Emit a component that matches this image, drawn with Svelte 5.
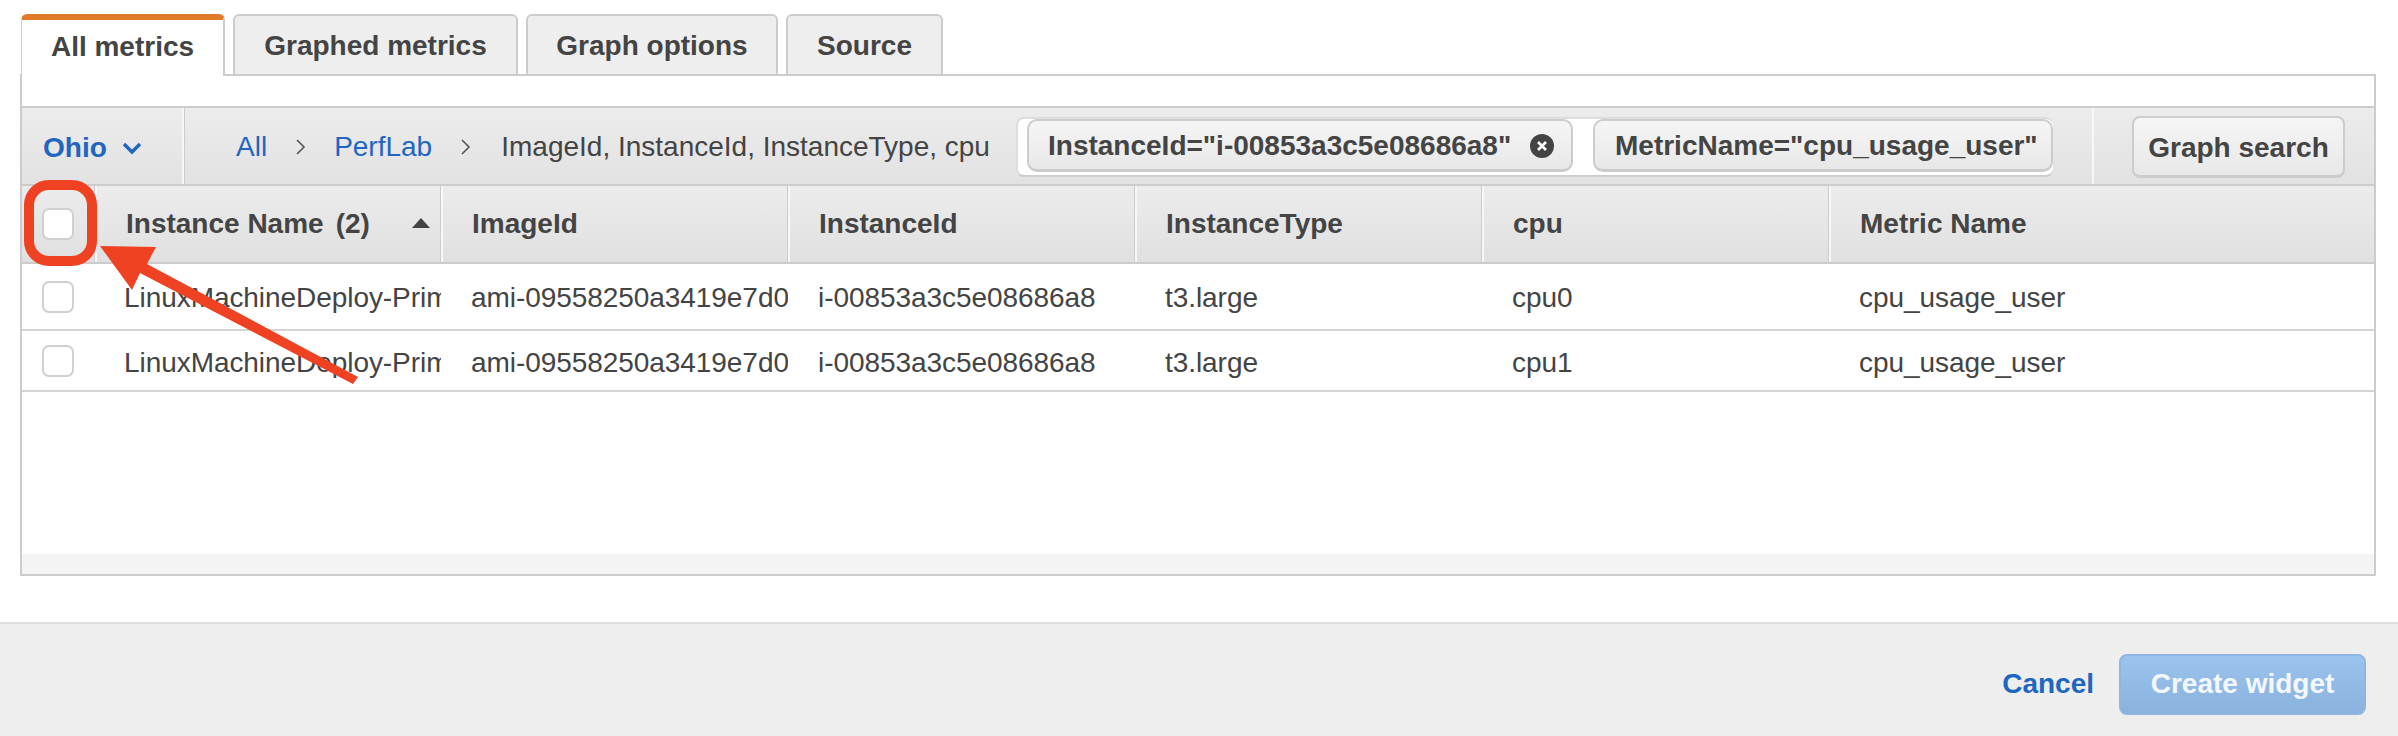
<script>
  const tabs = ["All metrics", "Graphed metrics", "Graph options", "Source"];
  const columns = ["ImageId", "InstanceId", "InstanceType", "cpu", "Metric Name"];
  const rows = [
    ["LinuxMachineDeploy-PrimaryInstance", "ami-09558250a3419e7d0f", "i-00853a3c5e08686a8", "t3.large", "cpu0", "cpu_usage_user"],
    ["LinuxMachineDeploy-PrimaryInstance", "ami-09558250a3419e7d0f", "i-00853a3c5e08686a8", "t3.large", "cpu1", "cpu_usage_user"]
  ];
</script>

<div class="page">
  <div class="tabs">
    {#each tabs as tab, i}
      <div class="tab" class:active={i === 0}>{tab}</div>
    {/each}
  </div>

  <div class="panel">
    <div class="spacer"></div>

    <div class="toolbar">
      <div class="region">
        <span>Ohio</span>
        <svg width="22" height="14" viewBox="0 0 22 14"><path d="M3 3l8 8 8-8" fill="none" stroke="#1f66c1" stroke-width="3.4" /></svg>
      </div>
      <div class="crumbs">
        <a href="#all">All</a>
        <svg class="sep one" width="12" height="20" viewBox="0 0 12 20"><path d="M2 3l7 7-7 7" fill="none" stroke="#555" stroke-width="1.6" /></svg>
        <a href="#perflab">PerfLab</a>
        <svg class="sep two" width="12" height="20" viewBox="0 0 12 20"><path d="M2 3l7 7-7 7" fill="none" stroke="#555" stroke-width="1.6" /></svg>
        <span class="dims">ImageId, InstanceId, InstanceType, cpu</span>
      </div>
      <div class="filters">
        <div class="token first">
          <span>InstanceId="i-00853a3c5e08686a8"</span>
          <svg width="24" height="24" viewBox="0 0 24 24"><circle cx="12" cy="12" r="12" fill="#444" /><path d="M8 8l8 8M16 8l-8 8" stroke="#fff" stroke-width="2.6" /></svg>
        </div>
        <div class="token second"><span>MetricName="cpu_usage_user"</span></div>
      </div>
      <div class="search">
        <button type="button">Graph search</button>
      </div>
    </div>

    <div class="head">
      <div class="check-col"><span class="check"></span></div>
      <div class="col name">
        <span>Instance Name</span><span class="count">(2)</span>
        <svg class="sort" width="18" height="10" viewBox="0 0 18 10"><path d="M9 0l9 10H0z" fill="#444" /></svg>
      </div>
      {#each columns as col}
        <div class="col">{col}</div>
      {/each}
    </div>

    {#each rows as row, r}
      <div class="row" class:second-row={r === 1}>
        <div class="check-col"><span class="check"></span></div>
        {#each row as cell}
          <div class="cell">{cell}</div>
        {/each}
      </div>
    {/each}

    <div class="empty"></div>
    <div class="strip"></div>
  </div>

  <div class="footer">
    <a class="cancel" href="#cancel">Cancel</a>
    <button class="create" type="button">Create widget</button>
  </div>

  <svg class="annotation" width="400" height="400" viewBox="0 0 400 400">
    <rect x="29" y="185" width="63" height="76" rx="20" fill="none" stroke="#ee4223" stroke-width="10" />
    <path d="M100 246L156 247L147 264L358 377L353 384L140 273L132 290Z" fill="#ee4223" />
  </svg>
</div>

<style>
  :global(body) {
    margin: 0;
    background: #fff;
  }

  .page {
    position: relative;
    width: 2398px;
    height: 736px;
    overflow: hidden;
    font-family: "Liberation Sans", Arial, sans-serif;
    font-size: 28px;
    color: #444;
    box-sizing: border-box;
    padding-top: 14px;
  }

  .tabs {
    display: flex;
    gap: 8px;
    height: 60px;
    margin-left: 21px;
    position: relative;
    z-index: 1;
  }

  .tab {
    box-sizing: border-box;
    height: 60px;
    padding-top: 2px;
    display: flex;
    align-items: center;
    justify-content: center;
    background: #eee;
    border: 2px solid #ccc;
    border-bottom: 0;
    border-radius: 6px 6px 0 0;
    font-weight: 700;
    white-space: nowrap;
  }

  .tab:nth-child(1) { width: 204px; }
  .tab:nth-child(2) { width: 285px; }
  .tab:nth-child(3) { width: 252px; }
  .tab:nth-child(4) { width: 157px; }

  .tab.active {
    height: 62px;
    background: #fff;
    border-top: 6px solid #e07b2a;
    border-left-width: 1px;
    padding: 0 0 2px;
    color: #444;
  }

  .panel {
    box-sizing: border-box;
    width: 2356px;
    height: 502px;
    margin-left: 20px;
    border: 2px solid #ccc;
    display: flex;
    flex-direction: column;
  }

  .spacer {
    height: 30px;
    flex: none;
  }

  .toolbar {
    display: flex;
    height: 80px;
    flex: none;
    box-sizing: border-box;
    border-top: 2px solid #ccc;
    border-bottom: 2px solid #ccc;
    background: linear-gradient(#ececec, #e2e2e2);
    align-items: stretch;
  }

  .region {
    width: 162px;
    flex: none;
    box-sizing: border-box;
    padding: 3px 0 0 21px;
    display: flex;
    align-items: center;
    gap: 14px;
    color: #1f66c1;
    font-weight: 700;
    border-right: 2px solid #f7f7f7;
  }

  .crumbs {
    width: 832px;
    flex: none;
    box-sizing: border-box;
    padding: 2px 0 0 51px;
    display: flex;
    align-items: center;
    white-space: nowrap;
    border-left: 1px solid #ccc;
  }

  .crumbs a {
    color: #1f66c1;
    text-decoration: none;
  }

  .sep.one {
    margin: 0 27px 0 28px;
  }

  .sep.two {
    margin: 0 29px 0 28px;
  }

  .filters {
    width: 1037px;
    flex: none;
    align-self: center;
    box-sizing: border-box;
    height: 60px;
    background: #fff;
    border: 2px solid #ddd;
    border-bottom-color: #ccc;
    border-right: 0;
    border-radius: 8px;
    padding: 0 0 0 9px;
    display: flex;
    gap: 20px;
    overflow: hidden;
    position: relative;
    top: 1px;
  }

  .token {
    box-sizing: border-box;
    height: 53px;
    flex: none;
    display: flex;
    align-items: center;
    gap: 19px;
    padding: 1px 16px 0 19px;
    font-size: 28px;
    font-weight: 700;
    white-space: nowrap;
    background: linear-gradient(#f5f5f5, #e8e8e8);
    border: 2px solid #ccc;
    border-bottom-width: 3px;
    border-radius: 10px;
  }

  .token svg {
    flex: none;
  }

  .token.first {
    width: 546px;
  }

  .token.second {
    width: 460px;
    padding: 1px 0 0 20px;
    overflow: hidden;
  }

  .search {
    flex: 1;
    display: flex;
    align-items: center;
    box-sizing: border-box;
    padding: 2px 0 0 38px;
    margin-left: 39px;
    border-left: 2px solid #f7f7f7;
  }

  .search button {
    box-sizing: border-box;
    width: 213px;
    height: 62px;
    padding: 2px 0 0;
    font: 700 28px "Liberation Sans", Arial, sans-serif;
    color: #444;
    background: linear-gradient(#f5f5f5, #e8e8e8);
    border: 2px solid #ccc;
    border-bottom-width: 3px;
    border-radius: 8px;
  }

  .head {
    display: flex;
    height: 76px;
    flex: none;
    background: linear-gradient(#ececec, #e0e0e0);
    border-bottom: 2px solid #ccc;
    box-sizing: content-box;
    font-weight: 700;
  }

  .check-col {
    width: 72px;
    flex: none;
    display: flex;
    align-items: center;
    padding-left: 20px;
    box-sizing: border-box;
  }

  .check {
    display: block;
    box-sizing: border-box;
    width: 32px;
    height: 32px;
    background: #fff;
    border: 2px solid #d0d0d0;
    border-radius: 7px;
  }

  .col {
    width: 347px;
    flex: none;
    box-sizing: border-box;
    padding-left: 31px;
    display: flex;
    align-items: center;
    border-left: 1px solid #ccc;
    box-shadow: inset 2px 0 #f7f7f7;
    white-space: nowrap;
  }

  .col.name {
    width: 346px;
    position: relative;
  }

  .count {
    margin-left: 12px;
  }

  .sort {
    position: absolute;
    right: 10px;
    top: 32px;
  }

  .row {
    display: flex;
    height: 65px;
    flex: none;
    border-bottom: 2px solid #d4d4d4;
  }

  .row.second-row {
    height: 59px;
  }

  .cell {
    width: 347px;
    flex: none;
    box-sizing: border-box;
    padding: 2px 0 0 30px;
    overflow: hidden;
    white-space: nowrap;
    display: flex;
    align-items: center;
    letter-spacing: -0.06px;
  }

  .second-row .cell {
    padding-top: 5px;
  }

  .row .cell:first-of-type {
    width: 346px;
  }

  .empty {
    flex: 1;
  }

  .strip {
    height: 20px;
    flex: none;
    background: #f4f4f4;
  }

  .footer {
    box-sizing: border-box;
    height: 114px;
    margin-top: 46px;
    background: #eee;
    border-top: 2px solid #ddd;
    display: flex;
    justify-content: flex-end;
    align-items: center;
    padding: 8px 32px 0 0;
    gap: 25px;
  }

  .cancel {
    color: #1f66c1;
    font-weight: 700;
    text-decoration: none;
  }

  .create {
    box-sizing: border-box;
    width: 247px;
    height: 61px;
    padding: 0;
    font: 700 28px "Liberation Sans", Arial, sans-serif;
    color: #f4f8fd;
    background: linear-gradient(#9ac3ee, #8ab2dd);
    border: 2px solid #8fb6e2;
    border-radius: 8px;
  }

  .annotation {
    position: absolute;
    left: 0;
    top: 0;
    pointer-events: none;
  }
</style>
